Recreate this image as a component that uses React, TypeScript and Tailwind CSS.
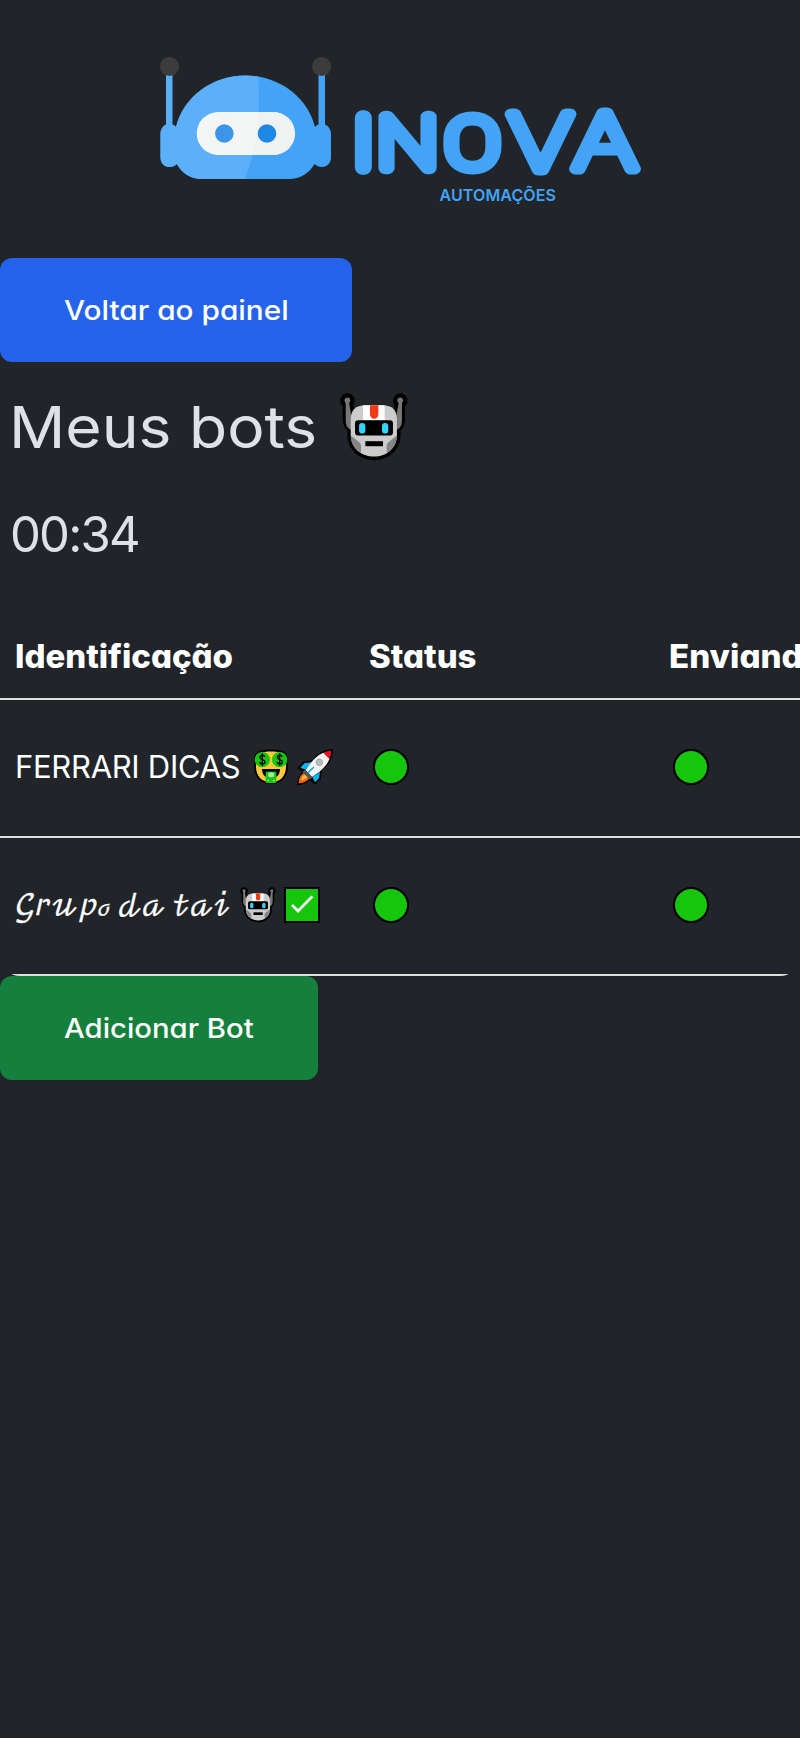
import React from "react";

type LetterProps = { c: string; x: number; y: number; sx: number; size: number; w: number; font?: string };

function Letter({ c, x, y, sx, size, w, font = "Inter" }: LetterProps) {
  return (
    <text
      transform={`translate(${x} ${y}) scale(${sx} 1)`}
      fontFamily={`${font}, sans-serif`}
      fontWeight={100}
      fontSize={size}
      strokeWidth={w}
      strokeLinejoin="round"
    >
      {c}
    </text>
  );
}

function Logo() {
  return (
    <svg className="block h-[258px] w-[800px]" viewBox="0 0 800 258">
      <rect x="166" y="72" width="6.5" height="58" fill="#59aff8" />
      <rect x="318.5" y="72" width="6.5" height="58" fill="#42a3f7" />
      <circle cx="169.5" cy="66.5" r="9.6" fill="#3c3c3c" />
      <circle cx="321.7" cy="66.5" r="9.6" fill="#3c3c3c" />
      <path
        d="M160.5 134c0-6 4-10 8.500-10 3 0 5.500 1 7 3C183 98 211 75.500 245.500 75.500S308 98 315 127c1.500-2 4-3 7-3 4.500 0 9 4 9 10v23.500c0 5.500-4 9.500-9 9.500-3 0-5.500-1-7.500-3-5 9-14.500 15-25.500 15H202c-11 0-20.500-6-25-15-2 2-5 3-8 3-4.500 0-8.500-4-8.500-9.500z"
        fill="#42a3f7"
      />
      <path
        d="M160.5 134c0-6 4-10 8.500-10 3 0 5.500 1 7 3C183 98 211 75.500 245.500 75.500c4.500 0 9 .4 13 1.200 1.500 45-1 70-13.500 102.300H202c-11 0-20.500-6-25-15-2 2-5 3-8 3-4.500 0-8.500-4-8.500-9.500z"
        fill="#5bb0f9"
      />
      <rect x="196.700" y="112" width="98" height="43" rx="21.500" fill="#f4f5f5" />
      <path d="M259 112h14.500a21.500 21.500 0 0 1 0 43H252q7-23 7-43z" fill="#f0f2f2" />
      <circle cx="224.300" cy="133.500" r="9.300" fill="#3c96e8" />
      <circle cx="267" cy="133.500" r="9.300" fill="#1e88e5" />
      <g fill="#42a3f7" stroke="#42a3f7">
        <Letter c="I" x={355} y={167} sx={1} size={67} w={15.5} />
        <Letter c="N" x={376.5} y={168} sx={1.15} size={70} w={12.5} />
        <Letter c="O" x={445} y={168} sx={1.16} size={71} w={12} font="Roboto" />
        <Letter c="V" x={508.5} y={170} sx={1.3} size={77} w={11} />
        <Letter c="A" x={573} y={169} sx={1.3} size={77} w={11} />
      </g>
      <text x="439.500" y="200.500" fill="#42a3f7" fontFamily="Inter, sans-serif" fontWeight={600} fontSize="16" textLength="116.500">
        AUTOMAÇÕES
      </text>
    </svg>
  );
}

function Robot({ className }: { className: string }) {
  return (
    <svg className={className} viewBox="30 38 204 206">
      <g stroke="#000" strokeWidth="20" strokeLinejoin="round" fill="#000">
        <circle cx="52" cy="61" r="12" />
        <circle cx="211" cy="61" r="12" />
        <path d="M48 61h8l8 38v48l-10-8c-5-6-6-14-6-24zM207 61h8v54c0 10-1 18-6 24l-10 8V99z" />
        <path d="M62 124c0-30 14-40 42-40h56c28 0 42 10 42 40v38c0 42-32 68-70 68s-70-26-70-68z" />
      </g>
      <path d="M43 61a9 9 0 1 1 14 7l7 40v42l-11-8c-5-7-6-14-6-24V69zM220 61a9 9 0 1 0-14 7l-7 40v42l11-8c5-7 6-14 6-24V69z" fill="#777" />
      <path d="M62 118c0-28 14-43 42-43h56c28 0 41 15 41 43v44c0 42-31 67-69 67s-70-25-70-67z" fill="#ccc" />
      <path d="M62 166l26 20c4 4 5 8 5 14v18c-20-10-31-29-31-52zM201 166l-26 20c-4 4-5 8-5 14v18c20-10 31-29 31-52z" fill="#858585" />
      <path d="M99 75h65v45H99z" fill="#fff" />
      <path d="M120 75h25v28a12.500 12.500 0 0 1-25 0z" fill="#f03a17" />
      <rect x="75" y="120" width="114" height="46" rx="9" />
      <rect x="87" y="128" width="19" height="32" rx="9.500" fill="#32d4f7" />
      <rect x="156" y="128" width="19" height="32" rx="9.500" fill="#32d4f7" />
      <rect x="106" y="183" width="53" height="15" />
    </svg>
  );
}

function MoneyFace() {
  return (
    <svg className="size-9 shrink-0" viewBox="0 0 108 108">
      <path d="M22 6C32 0 76 0 86 6c16 2 22 16 18 38 4 38-18 62-50 62S0 82 4 44C0 22 6 8 22 6z" />
      <path d="M26 11c12-5 44-5 56 0l17 36c2 32-15 53-45 53S7 79 9 47z" fill="#ffc83d" />
      <circle cx="28" cy="32" r="23" fill="#16c60c" />
      <circle cx="80" cy="32" r="23" fill="#16c60c" />
      <g fill="none" stroke="#000" strokeWidth="4">
        <path d="M36 23c-3-6-15-6-15 2 0 9 15 5 15 14 0 8-14 8-16 0M28 13v38M88 23c-3-6-15-6-15 2 0 9 15 5 15 14 0 8-14 8-16 0M80 13v38" />
      </g>
      <path d="M27 60h54c0 17-10 28-27 28S27 77 27 60z" />
      <path d="M38 68h32v34H38z" fill="#16c60c" />
      <rect x="45" y="70" width="19" height="15" rx="7" fill="#a5e8a0" />
      <path d="M43 92h5v5h-5zM60 92h5v5h-5z" fill="#a5e8a0" />
    </svg>
  );
}

function Rocket() {
  return (
    <svg className="size-9 shrink-0" viewBox="0 0 108 108">
      <path d="M107 0C78 2 62 12 46 34L18 38 2 57l15 11C6 78 0 92 0 108c15 0 29-4 38-14l17 13 17-18 3-27C96 46 108 30 107 0z" />
      <path d="M22 43l21-3-16 22-17-6zM69 69l-3 19-12 12-8-15z" fill="#00b7f1" />
      <path d="M5 103c0-16 7-26 17-33l17 16c-9 12-20 17-34 17z" fill="#f7630c" />
      <path d="M12 94c1-9 5-15 12-19l8 8c-5 7-12 10-20 11z" fill="#ffb43d" />
      <path d="M80 11C58 18 38 43 26 64l19 20c23-14 45-33 53-56z" fill="#f4f4f4" />
      <path d="M102 5c-8 0-15 2-23 6l18 19c4-8 6-16 5-25z" fill="#e81224" />
      <path d="M24 62l22 23-6 7-24-22z" fill="#555" />
      <circle cx="67" cy="40" r="10" fill="#bbb" stroke="#999" strokeWidth="2" />
      <path d="M32 72l19-18" stroke="#00a5dc" strokeWidth="4" />
    </svg>
  );
}

function Check() {
  return (
    <svg className="size-9 shrink-0" viewBox="0 0 108 108">
      <path d="M0 0h108v108H0z" />
      <path d="M6 6h96v96H6z" fill="#16c60c" />
      <path d="M24 54l18 18 43-44" fill="none" stroke="#fff" strokeWidth="8" />
    </svg>
  );
}

function Dot() {
  return <span className="ml-1 block size-9 rounded-full border-2 border-black bg-[#16c60c]" />;
}

const row = "grid h-[138px] grid-cols-[353px_300px_300px] items-center border-b-2 border-[#dedede] pb-0.5";

export default function App() {
  return (
    <div className="min-h-[1738px] w-[800px] overflow-hidden bg-[#212529] font-['Inter',sans-serif] text-[#dee2e6] [font-feature-settings:'cv11']">
      <Logo />
      <button className="flex h-[104px] w-[352px] items-center rounded-xl bg-[#2563eb] pl-16 text-[27.5px] font-medium whitespace-nowrap text-white">
        <span className="origin-left scale-x-[1.083] pt-px">Voltar ao painel</span>
      </button>
      <h1 className="flex h-[130px] items-center pl-[9px] text-[58px] whitespace-nowrap">
        <span className="w-[331px] origin-left scale-x-[1.075]">Meus bots</span>
        <Robot className="h-[68.500px] w-[68px]" />
      </h1>
      <p className="flex h-[84px] items-center pt-0.5 pl-[10px] text-[49px] tracking-[-1.800px]">00:34</p>
      <section className="mt-10 overflow-hidden rounded-[20px] text-white shadow-[0_0_30px_rgba(0,0,0,0.05)]">
        <div className="w-[953px] whitespace-nowrap">
          <div className="grid h-[84px] grid-cols-[353px_300px_300px] items-center border-b-2 border-[#dedede] text-[32px] font-extrabold">
            <span className="ml-[15px] w-max origin-left scale-x-[1.030]">Identificação</span>
            <span className="ml-4 w-max origin-left scale-x-[1.030]">Status</span>
            <span className="ml-4 w-max origin-left scale-x-[1.035]">Enviando</span>
          </div>
          <div className={row}>
            <div className="flex items-center pl-[15px]">
              <span className="w-[238px] text-[31px] tracking-[-0.300px]">FERRARI DICAS</span>
              <MoneyFace />
              <span className="w-2" />
              <Rocket />
            </div>
            <div className="pl-4"><Dot /></div>
            <div className="pl-4"><Dot /></div>
          </div>
          <div className={row}>
            <div className="flex items-center pl-[14px]">
              <span className="w-[226px] pt-1.5 font-['DejaVu_Math_TeX_Gyre',serif] text-[29px] leading-9 tracking-[-1.800px] [-webkit-text-stroke:0.400px_white]">
                𝒢𝓇𝓊𝓅<span className="text-[22px]">ℴ</span> 𝒹𝒶 𝓉𝒶𝒾
              </span>
              <Robot className="size-9 shrink-0" />
              <span className="w-2" />
              <Check />
            </div>
            <div className="pl-4"><Dot /></div>
            <div className="pl-4"><Dot /></div>
          </div>
        </div>
      </section>
      <button className="flex h-[104px] w-[318px] items-center rounded-xl bg-[#15803d] pl-16 text-[27.5px] font-medium whitespace-nowrap text-white">
        <span className="origin-left scale-x-[1.065] pt-px">Adicionar Bot</span>
      </button>
    </div>
  );
}
